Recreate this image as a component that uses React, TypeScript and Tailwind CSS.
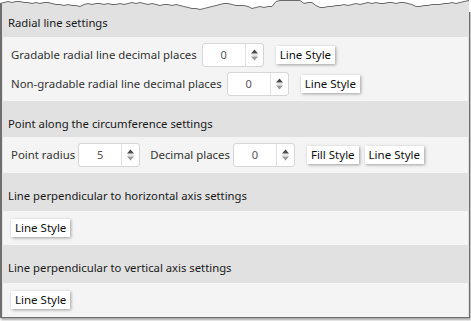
import type { ReactNode } from "react";

const TEAR: [number, number][] = [
  [0, 3], [4, 2], [8, 1], [12, 2], [16, 1], [20, 1], [24, 2], [28, 2], [32, 3], [36, 2], [40, 3], [44, 2],
  [48, 2], [52, 3], [56, 4], [60, 4], [64, 5], [68, 4], [72, 5], [76, 5], [80, 6], [84, 4], [88, 3], [92, 4],
  [96, 3], [100, 3], [104, 4], [108, 3], [112, 4], [116, 4], [120, 3], [124, 4], [128, 3], [132, 2], [136, 3],
  [140, 2], [144, 3], [148, 4], [152, 3], [156, 4], [160, 5], [164, 4], [168, 4], [172, 5], [176, 4], [180, 5],
  [184, 6], [188, 7], [192, 8], [196, 8], [200, 9], [204, 8], [208, 7], [212, 6], [216, 5], [220, 4], [224, 3],
  [228, 3], [232, 4], [236, 5], [240, 5], [244, 5], [248, 6], [252, 8], [256, 7], [260, 6], [264, 7], [268, 6],
  [272, 6], [276, 1], [280, 0], [290, 0], [300, 0], [304, 3], [308, 2], [312, 2], [316, 5], [320, 7], [324, 7],
  [328, 6], [332, 6], [336, 5], [340, 5], [344, 4], [348, 5], [352, 4], [356, 3], [360, 4], [364, 3], [368, 2],
  [372, 3], [376, 2], [380, 3], [384, 3], [388, 2], [392, 2], [396, 3], [400, 2], [404, 2], [408, 3], [412, 4],
  [416, 6], [420, 6], [424, 5], [428, 5], [432, 4], [436, 4], [440, 4], [444, 3], [448, 3], [452, 2], [456, 3],
  [460, 2], [464, 1], [469, 0],
];

// torn top edge of the screenshot frame
function TornEdge() {
  const line = TEAR.map(([x, y], i) => `${i ? "L" : "M"}${x} ${y + 0.5}`).join(" ");
  return (
    <svg width="471" height="12" className="absolute left-0 top-0">
      <path d="M469 0 L471 0 L471 12 L469 12 Z" fill="#ffffff" />
      <path d={`M0 0 ${line.replace("M", "L")} L469 0 Z`} fill="#ffffff" />
      <path d={line} fill="none" stroke="#6a6a6a" strokeWidth="1" />
    </svg>
  );
}

function Spinner({ value }: { value: string }) {
  return (
    <div className="flex h-[24px] w-[62px] rounded-[3px] border border-[#d6d6d6] bg-white">
      <div className="flex flex-1 items-center justify-center text-[11px] text-[#555]">{value}</div>
      <div className="flex w-[18px] items-center justify-center border-l border-[#e2e2e2]">
        <svg width="9" height="14" viewBox="0 0 9 14">
          <path d="M1 5.5 L4.5 1.5 L8 5.5 Z" fill="#4a4a4a" />
          <path d="M1.5 7 H7.5" stroke="#c8c8c8" strokeWidth="1" />
          <path d="M1 8.5 L8 8.5 L4.5 12.5 Z" fill="#9a9a9a" />
        </svg>
      </div>
    </div>
  );
}

function StyleButton({ children }: { children: ReactNode }) {
  return (
    <button
      type="button"
      className="h-[18px] bg-white px-[4px] text-[11.5px] leading-[18px] text-[#111] shadow-[1px_1px_3px_rgba(0,0,0,0.35)]"
    >
      {children}
    </button>
  );
}

function Header({ title, h }: { title: string; h: string }) {
  return (
    <div className={`${h} pl-[6px] pt-[15px] text-[11.3px] leading-[16px] text-[#1a1a1a]`}>{title}</div>
  );
}

export default function App() {
  return (
    <div className="relative h-[321px] w-[471px] overflow-hidden bg-white font-['Noto_Sans','Open_Sans',sans-serif]">
      <div className="flex h-[318px] w-[470px] flex-col border-b border-l-2 border-r border-[#6e6e6e] bg-[#e1e1e1] shadow-[1px_2px_2px_rgba(0,0,0,0.35)]">
        <Header title="Radial line settings" h="h-[37px]" />
        <div className="mx-[1px] flex h-[64px] flex-col gap-[5px] bg-[#f4f4f4] pl-[8px] pt-[6px] text-[11.4px] text-[#333]">
          <div className="flex h-[24px] items-center">
            <span>Gradable radial line decimal places</span>
            <div className="ml-[5px]">
              <Spinner value="0" />
            </div>
            <div className="ml-[12px]">
              <StyleButton>Line Style</StyleButton>
            </div>
          </div>
          <div className="flex h-[24px] items-center">
            <span>Non-gradable radial line decimal places</span>
            <div className="ml-[5px]">
              <Spinner value="0" />
            </div>
            <div className="ml-[12px]">
              <StyleButton>Line Style</StyleButton>
            </div>
          </div>
        </div>

        <Header title="Point along the circumference settings" h="h-[36px]" />
        <div className="mx-[1px] flex h-[36px] items-center bg-[#f4f4f4] pl-[8px] text-[11.4px] text-[#333]">
          <span>Point radius</span>
          <div className="ml-[3px]">
            <Spinner value="5" />
          </div>
          <span className="ml-[10px]">Decimal places</span>
          <div className="ml-[3px]">
            <Spinner value="0" />
          </div>
          <div className="ml-[12px] flex gap-[6px]">
            <StyleButton>Fill Style</StyleButton>
            <StyleButton>Line Style</StyleButton>
          </div>
        </div>

        <Header title="Line perpendicular to horizontal axis settings" h="h-[38px]" />
        <div className="mx-[1px] flex h-[34px] items-center bg-[#f4f4f4] pl-[8px]">
          <StyleButton>Line Style</StyleButton>
        </div>

        <Header title="Line perpendicular to vertical axis settings" h="h-[38px]" />
        <div className="mx-[1px] flex h-[34px] items-center bg-[#f4f4f4] pl-[8px]">
          <StyleButton>Line Style</StyleButton>
        </div>
      </div>
      <TornEdge />
    </div>
  );
}
